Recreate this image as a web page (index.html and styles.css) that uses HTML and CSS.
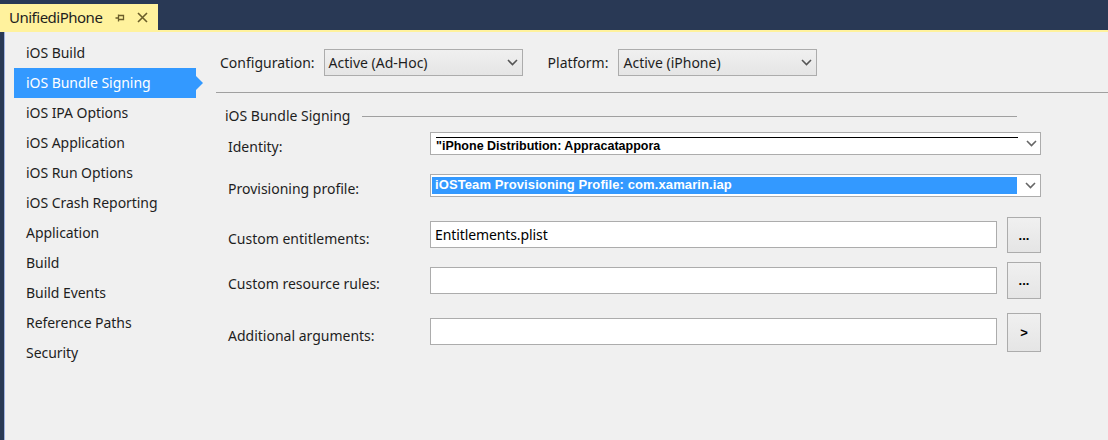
FILE: index.html
```html
<!DOCTYPE html>
<html>
<head>
<meta charset="utf-8">
<link rel="stylesheet" href="styles.css">
</head>
<body>
<div class="tabstrip">
  <div class="tab">
    <span class="tab-title">UnifiediPhone</span>
    <svg class="pin" width="10" height="10" viewBox="0 0 10 10"><path d="M0.5 5H3.5M3.5 1.5V8.5M3.5 2.5H8.5V6.5H3.5M8.5 2.5V6.5" fill="none" stroke="#6b5e2a" stroke-width="1.3"/></svg>
    <svg class="close" width="11" height="11" viewBox="0 0 11 11"><path d="M1 1L10 10M10 1L1 10" stroke="#6b5e2a" stroke-width="1.6"/></svg>
  </div>
</div>
<div class="tabline"></div>
<div class="main">
  <nav class="sidebar">
    <div class="nav-item">iOS Build</div>
    <div class="nav-item active">iOS Bundle Signing</div>
    <div class="nav-item">iOS IPA Options</div>
    <div class="nav-item">iOS Application</div>
    <div class="nav-item">iOS Run Options</div>
    <div class="nav-item">iOS Crash Reporting</div>
    <div class="nav-item">Application</div>
    <div class="nav-item">Build</div>
    <div class="nav-item">Build Events</div>
    <div class="nav-item">Reference Paths</div>
    <div class="nav-item">Security</div>
  </nav>
  <section class="content">
    <div class="config-bar">
      <span class="cfg-label">Configuration:</span>
      <div class="select cfg-select"><span>Active (Ad-Hoc)</span><svg class="chev" width="11" height="7" viewBox="0 0 11 7"><path d="M1 1L5.5 5.5L10 1" fill="none" stroke="#555" stroke-width="1.6"/></svg></div>
      <span class="cfg-label plat-label">Platform:</span>
      <div class="select cfg-select"><span>Active (iPhone)</span><svg class="chev" width="11" height="7" viewBox="0 0 11 7"><path d="M1 1L5.5 5.5L10 1" fill="none" stroke="#555" stroke-width="1.6"/></svg></div>
    </div>
    <div class="group">
      <div class="group-header"><span>iOS Bundle Signing</span><div class="group-rule"></div></div>
      <div class="row row-identity">
        <span class="row-label">Identity:</span>
        <div class="combo">
          <div class="combo-value identity-value"><span>"iPhone Distribution: Appracatappora</span></div>
          <svg class="chev combo-chev" width="11" height="7" viewBox="0 0 11 7"><path d="M1 1L5.5 5.5L10 1" fill="none" stroke="#666" stroke-width="1.6"/></svg>
        </div>
      </div>
      <div class="row row-prov">
        <span class="row-label">Provisioning profile:</span>
        <div class="combo">
          <div class="combo-value prov-value">iOSTeam Provisioning Profile: com.xamarin.iap</div>
          <svg class="chev combo-chev" width="11" height="7" viewBox="0 0 11 7"><path d="M1 1L5.5 5.5L10 1" fill="none" stroke="#666" stroke-width="1.6"/></svg>
        </div>
      </div>
      <div class="row row-ent">
        <span class="row-label">Custom entitlements:</span>
        <div class="textbox">Entitlements.plist</div>
        <div class="btn">...</div>
      </div>
      <div class="row row-res">
        <span class="row-label">Custom resource rules:</span>
        <div class="textbox"></div>
        <div class="btn">...</div>
      </div>
      <div class="row row-args">
        <span class="row-label">Additional arguments:</span>
        <div class="textbox"></div>
        <div class="btn">&gt;</div>
      </div>
    </div>
  </section>
</div>
</body>
</html>
```
FILE: styles.css
```css
html, body {
  margin: 0;
  padding: 0;
  height: 100%;
}
body {
  background: #293955;
  font-family: "Noto Sans", "Open Sans", sans-serif;
  font-size: 14px;
  color: #1e1e1e;
  overflow: hidden;
}
.tabstrip {
  height: 30px;
  display: flex;
  align-items: flex-end;
}
.tab {
  height: 26px;
  width: 158px;
  background: #fff29d;
  display: flex;
  align-items: center;
  box-sizing: border-box;
  padding-left: 9px;
}
.tab-title {
  font-size: 15px;
  color: #1e1e1e;
  letter-spacing: -0.5px;
}
.pin {
  margin-left: 13px;
  margin-top: 1px;
}
.close {
  margin-left: 12px;
}
.tabline {
  height: 2px;
  background: #fff29d;
}
.main {
  display: flex;
  height: 408px;
  background: #f0f0f0;
  border-left: 4px solid #293955;
}
.sidebar {
  width: 212px;
  flex: none;
  border-left: 1px solid #9fb2e0;
  padding-top: 6px;
  box-sizing: border-box;
}
.nav-item {
  height: 30px;
  line-height: 30px;
  padding-left: 21px;
  font-size: 14px;
  color: #1e1e1e;
  letter-spacing: -0.05px;
}
.nav-item.active {
  position: relative;
  background: #3399ff;
  color: #fff;
  margin-left: 9px;
  padding-left: 12px;
  width: 182px;
  box-sizing: border-box;
}
.nav-item.active::after {
  content: "";
  position: absolute;
  right: -7px;
  top: 8px;
  border-left: 7px solid #3399ff;
  border-top: 7px solid transparent;
  border-bottom: 7px solid transparent;
}
.content {
  flex: 1;
}
.config-bar {
  height: 61px;
  border-bottom: 1px solid #a0a0a0;
  display: flex;
  align-items: center;
  padding-left: 4px;
  box-sizing: border-box;
  padding-top: 1px;
}
.cfg-label {
  margin-right: 9px;
  font-size: 14px;
}
.plat-label {
  margin-left: 25px;
  margin-right: 10px;
}
.select {
  height: 27px;
  width: 199px;
  box-sizing: border-box;
  border: 1px solid #acacac;
  background: linear-gradient(#f0f0f0, #e5e5e5);
  display: flex;
  align-items: center;
  padding-left: 4px;
  padding-right: 4px;
  justify-content: space-between;
  font-size: 14px;
}
.group {
  padding-left: 9px;
}
.group-header {
  height: 22px;
  margin-top: 11px;
  display: flex;
  align-items: center;
  font-size: 14px;
}
.group-rule {
  width: 655px;
  height: 1px;
  background: #a0a0a0;
  margin-left: 12px;
  margin-top: 2px;
}
.row {
  display: flex;
  align-items: center;
  padding-left: 3px;
}
.row-label {
  width: 202px;
  flex: none;
  font-size: 14px;
  padding-top: 6px;
}
.row-identity { height: 23px; margin-top: 6px; }
.row-prov { height: 23px; margin-top: 19px; }
.row-ent { height: 36px; margin-top: 20px; }
.row-res { height: 37px; margin-top: 9px; }
.row-args { height: 39px; margin-top: 14px; }
.row-ent .textbox { margin-top: -2px; }
.row-args .textbox { margin-top: -2px; }
.combo {
  width: 611px;
  height: 23px;
  box-sizing: border-box;
  border: 1px solid #acacac;
  background: #fff;
  display: flex;
  align-items: center;
  padding: 0 1px;
}
.combo-value {
  width: 585px;
  flex: none;
  font-family: "Liberation Sans", Arial, sans-serif;
  font-weight: bold;
  font-size: 13px;
  box-sizing: border-box;
  overflow: hidden;
  white-space: nowrap;
}
.identity-value {
  height: 16px;
  border-top: 1px solid #000;
  margin-left: 4px;
  width: 582px;
  margin-top: 3px;
  line-height: 17px;
  color: #000;
  font-size: 12.5px;
}
.prov-value {
  height: 17px;
  background: #3399ff;
  color: #fff;
  padding-left: 3px;
  line-height: 16px;
  letter-spacing: 0.1px;
}
.combo-chev {
  margin-left: 8px;
}
.textbox {
  width: 567px;
  height: 27px;
  box-sizing: border-box;
  border: 1px solid #acacac;
  background: #fff;
  flex: none;
  padding-left: 4px;
  line-height: 25px;
  font-size: 14px;
  letter-spacing: -0.1px;
  color: #000;
}
.btn {
  margin-left: 10px;
  width: 34px;
  height: 100%;
  box-sizing: border-box;
  border: 1px solid #acacac;
  background: linear-gradient(#f0f0f0, #e5e5e5);
  display: flex;
  align-items: center;
  justify-content: center;
  font-family: "Liberation Sans", Arial, sans-serif;
  font-weight: bold;
  font-size: 13px;
  color: #000;
}
```
